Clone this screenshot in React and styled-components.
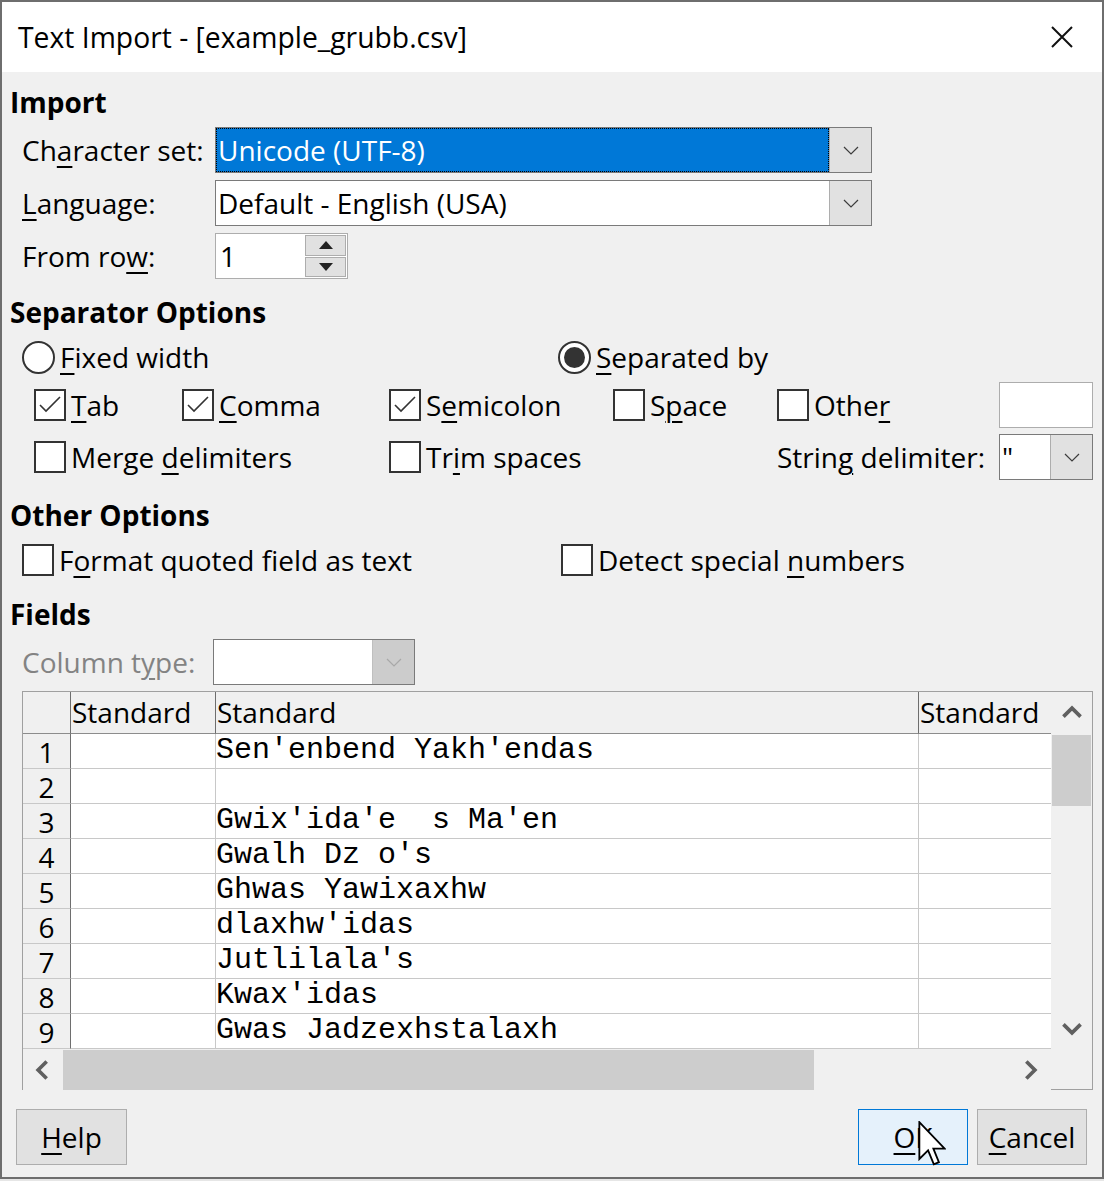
import React from 'react';
import styled, { createGlobalStyle } from 'styled-components';

const GlobalStyle = createGlobalStyle`
  html, body {
    margin: 0;
    padding: 0;
    background: #e6e6e6;
  }
  body {
    font-family: 'Open Sans', 'Noto Sans', sans-serif;
    color: #000;
  }
`;

const Window = styled.div`
  position: relative;
  width: 1104px;
  height: 1179px;
  box-sizing: border-box;
  border: 2px solid #6e6e6e;
  display: flex;
  flex-direction: column;
  background: #f0f0f0;
  font-size: 28px;
`;

const TitleBar = styled.div`
  flex: none;
  height: 70px;
  background: #fff;
  display: flex;
  align-items: center;
  padding-left: 16px;
  font-size: 28.3px;
`;

const Title = styled.div`
  flex: 1;
`;

const CloseBtn = styled.div`
  width: 80px;
  height: 70px;
  display: flex;
  align-items: center;
  justify-content: center;
`;

const Body = styled.div`
  flex: 1;
  display: flex;
  flex-direction: column;
  padding: 10px 0 0 8px;
`;

const Heading = styled.div`
  height: 40px;
  line-height: 40px;
  font-weight: 700;
  margin-top: ${p => p.$mt || 0}px;
`;

const U = styled.span`
  text-decoration: underline;
  text-decoration-thickness: 2px;
  text-underline-offset: 5px;
`;

const FormGrid = styled.div`
  margin-top: ${p => p.$mt ?? 5}px;
  padding-left: 12px;
  display: grid;
  grid-template-columns: ${p => p.$label || 193}px auto;
  grid-auto-rows: 46px;
  row-gap: 7px;
  justify-items: start;
`;

const Label = styled.div`
  line-height: 46px;
  white-space: nowrap;
  color: ${p => (p.$disabled ? '#838383' : '#000')};
`;

const Combo = styled.div`
  box-sizing: border-box;
  width: ${p => p.$w}px;
  height: 46px;
  border: 1px solid #7a7a7a;
  background: #fff;
  display: flex;
`;

const ComboText = styled.div`
  flex: 1;
  line-height: 44px;
  padding-left: 2px;
  white-space: nowrap;
  overflow: hidden;
  background: ${p => (p.$selected ? '#0078d7' : 'transparent')};
  color: ${p => (p.$selected ? '#fff' : '#000')};
  outline: ${p => (p.$selected ? '1px dotted #000' : 'none')};
  outline-offset: -1px;
`;

const ComboButton = styled.div`
  flex: none;
  width: 41px;
  background: ${p => (p.$disabled ? '#cccccc' : '#e1e1e1')};
  border-left: 1px solid ${p => (p.$disabled ? '#bfbfbf' : '#adadad')};
  display: flex;
  align-items: center;
  justify-content: center;
`;

const Spin = styled.div`
  box-sizing: border-box;
  width: 133px;
  height: 46px;
  border: 1px solid #adadad;
  background: #fff;
  display: flex;
`;

const SpinText = styled.div`
  flex: 1;
  line-height: 44px;
  padding-left: 4px;
`;

const SpinButtons = styled.div`
  width: 41px;
  display: flex;
  flex-direction: column;
  padding: 1px 1px 1px 0;
  gap: 1px;
`;

const SpinButton = styled.div`
  flex: 1;
  background: #e1e1e1;
  border: 1px solid #adadad;
  display: flex;
  align-items: center;
  justify-content: center;
`;

const OptionRow = styled.div`
  margin-top: ${p => p.$mt ?? 6}px;
  height: 38px;
  padding-left: 12px;
  display: grid;
  grid-template-columns: ${p => p.$first}px auto;
  align-items: center;
`;

const Option = styled.label`
  display: flex;
  align-items: center;
  gap: 5px;
  white-space: nowrap;
  grid-column: ${p => p.$span || 'auto'};
`;

const RadioCircle = styled.span`
  box-sizing: border-box;
  width: 33px;
  height: 33px;
  border: 2px solid #333;
  border-radius: 50%;
  background: #fff;
  display: flex;
  align-items: center;
  justify-content: center;
  &::after {
    content: '';
    width: 21px;
    height: 21px;
    border-radius: 50%;
    background: ${p => (p.$checked ? '#333' : 'transparent')};
  }
`;

const Box = styled.span`
  box-sizing: border-box;
  flex: none;
  width: 32px;
  height: 32px;
  border: 2px solid #333;
  background: #fff;
  display: flex;
  align-items: center;
  justify-content: center;
`;

const CheckGrid = styled.div`
  margin-top: 6px;
  padding-left: 24px;
  display: grid;
  grid-template-columns: 148px 207px 224px 164px 222px 94px;
  grid-auto-rows: 46px;
  row-gap: 6px;
  align-items: center;
`;

const Field = styled.div`
  box-sizing: border-box;
  width: 94px;
  height: 46px;
  border: 1px solid #adadad;
  background: #fff;
`;

const Table = styled.div`
  margin: 6px 0 0 12px;
  width: 1071px;
  height: 399px;
  box-sizing: border-box;
  border-top: 1px solid #a0a0a0;
  border-left: 1px solid #a0a0a0;
  display: grid;
  grid-template-columns: 1fr 42px;
  grid-template-rows: 1fr 41px;
  background: #fff;
`;

const Cells = styled.div`
  overflow: hidden;
  display: grid;
  grid-template-columns: 48px 145px 703px 132px;
  grid-template-rows: 42px;
  grid-auto-rows: 35px;
`;

const HeadCell = styled.div`
  box-sizing: border-box;
  background: #f0f0f0;
  border-bottom: 1px solid #8c8c8c;
  border-right: ${p => (p.$last ? 'none' : '1px solid #6e6e6e')};
  line-height: 40px;
  padding-left: 1px;
  white-space: nowrap;
`;

const RowNum = styled.div`
  box-sizing: border-box;
  background: #f0f0f0;
  border-bottom: 1px solid #c8c8c8;
  border-right: 1px solid #6e6e6e;
  text-align: center;
  line-height: 34px;
  height: 35px;
  padding-top: 1px;
`;

const Cell = styled.div`
  box-sizing: border-box;
  border-bottom: 1px solid #c8c8c8;
  border-right: ${p => (p.$last ? 'none' : '1px solid #c8c8c8')};
  font-family: 'Liberation Mono', 'DejaVu Sans Mono', monospace;
  font-size: 30px;
  line-height: 33px;
  white-space: pre;
`;

const VScroll = styled.div`
  background: #f0f0f0;
  border-right: 1px solid #a0a0a0;
  display: flex;
  flex-direction: column;
`;

const ArrowBox = styled.div`
  flex: none;
  height: ${p => p.$h || 42}px;
  width: ${p => p.$w || 'auto'};
  display: flex;
  align-items: center;
  justify-content: center;
`;

const VTrack = styled.div`
  flex: 1;
  padding: 1px 1px 0 1px;
`;

const VThumb = styled.div`
  height: 71px;
  background: #cdcdcd;
`;

const HScroll = styled.div`
  background: #f0f0f0;
  display: flex;
  align-items: stretch;
`;

const HTrack = styled.div`
  flex: 1;
  padding-top: 1px;
`;

const HThumb = styled.div`
  width: 751px;
  height: 100%;
  background: #cdcdcd;
`;

const Corner = styled.div`
  background: #f0f0f0;
  border-right: 1px solid #a0a0a0;
  border-bottom: 1px solid #a0a0a0;
`;

const Footer = styled.div`
  margin-top: 19px;
  padding: 0 15px 0 6px;
  display: flex;
  align-items: center;
`;

const Button = styled.div`
  position: relative;
  box-sizing: border-box;
  width: ${p => p.$w || 111}px;
  height: 56px;
  border: 1px solid ${p => (p.$default ? '#0078d7' : '#adadad')};
  background: ${p => (p.$default ? '#e5f1fb' : '#e1e1e1')};
  display: flex;
  align-items: center;
  justify-content: center;
  margin-left: ${p => p.$ml || 0}px;
`;

const Spacer = styled.div`
  flex: 1;
`;

const Cursor = styled.svg`
  position: absolute;
  left: 59px;
  top: 11px;
`;

const Chevron = ({ dir = 'down', size = 18, color = '#3c3c3c', sw = 1.2 }) => {
  const paths = {
    down: 'M2 6 L9 13 L16 6',
    up: 'M2 12 L9 5 L16 12',
    left: 'M12 2 L5 9 L12 16',
    right: 'M6 2 L13 9 L6 16',
  };
  return (
    <svg width={size} height={size} viewBox="0 0 18 18">
      <path d={paths[dir]} fill="none" stroke={color} strokeWidth={sw} />
    </svg>
  );
};

const Triangle = ({ up }) => (
  <svg width="14" height="8" viewBox="0 0 14 8">
    <path d={up ? 'M0 8 L7 0 L14 8 Z' : 'M0 0 L7 8 L14 0 Z'} fill="#222" />
  </svg>
);

const Check = () => (
  <svg width="28" height="28" viewBox="0 0 28 28">
    <path d="M4 14 L10 20 L24 6" fill="none" stroke="#333" strokeWidth="1.6" />
  </svg>
);

const CheckOption = ({ checked, children, span }) => (
  <Option $span={span}>
    <Box>{checked && <Check />}</Box>
    <span>{children}</span>
  </Option>
);

const rows = [
  "Sen'enbend Yakh'endas",
  '',
  "Gwix'ida'e  s Ma'en",
  "Gwalh Dz o's",
  'Ghwas Yawixaxhw',
  "dlaxhw'idas",
  "Jutlilala's",
  "Kwax'idas",
  'Gwas Jadzexhstalaxh',
];

const App = () => (
  <>
    <GlobalStyle />
    <Window>
      <TitleBar>
        <Title>Text Import - [example_grubb.csv]</Title>
        <CloseBtn>
          <svg width="24" height="24" viewBox="0 0 24 24">
            <path d="M2 2 L22 22 M22 2 L2 22" stroke="#111" strokeWidth="2" />
          </svg>
        </CloseBtn>
      </TitleBar>
      <Body>
        <Heading>Import</Heading>
        <FormGrid>
          <Label>
            Ch<U>a</U>racter set:
          </Label>
          <Combo $w={657}>
            <ComboText $selected>Unicode (UTF-8)</ComboText>
            <ComboButton>
              <Chevron />
            </ComboButton>
          </Combo>
          <Label>
            <U>L</U>anguage:
          </Label>
          <Combo $w={657}>
            <ComboText>Default - English (USA)</ComboText>
            <ComboButton>
              <Chevron />
            </ComboButton>
          </Combo>
          <Label>
            From ro<U>w</U>:
          </Label>
          <Spin>
            <SpinText>1</SpinText>
            <SpinButtons>
              <SpinButton>
                <Triangle up />
              </SpinButton>
              <SpinButton>
                <Triangle />
              </SpinButton>
            </SpinButtons>
          </Spin>
        </FormGrid>

        <Heading $mt={13}>Separator Options</Heading>
        <OptionRow $first={536}>
          <Option>
            <RadioCircle />
            <span>
              <U>F</U>ixed width
            </span>
          </Option>
          <Option>
            <RadioCircle $checked />
            <span>
              <U>S</U>eparated by
            </span>
          </Option>
        </OptionRow>
        <CheckGrid>
          <CheckOption checked>
            <U>T</U>ab
          </CheckOption>
          <CheckOption checked>
            <U>C</U>omma
          </CheckOption>
          <CheckOption checked>
            S<U>e</U>micolon
          </CheckOption>
          <CheckOption>
            S<U>p</U>ace
          </CheckOption>
          <CheckOption>
            Othe<U>r</U>
          </CheckOption>
          <Field />
          <CheckOption span="span 2">
            Merge <U>d</U>elimiters
          </CheckOption>
          <CheckOption span="span 2">
            Tr<U>i</U>m spaces
          </CheckOption>
          <Label>
            Strin<U>g</U> delimiter:
          </Label>
          <Combo $w={94}>
            <ComboText>"</ComboText>
            <ComboButton>
              <Chevron />
            </ComboButton>
          </Combo>
        </CheckGrid>

        <Heading $mt={15}>Other Options</Heading>
        <OptionRow $first={539} $mt={6}>
          <CheckOption>
            F<U>o</U>rmat quoted field as text
          </CheckOption>
          <CheckOption>
            Detect special <U>n</U>umbers
          </CheckOption>
        </OptionRow>

        <Heading $mt={15}>Fields</Heading>
        <FormGrid $label={191} $mt={5}>
          <Label $disabled>
            Column t<U>y</U>pe:
          </Label>
          <Combo $w={202}>
            <ComboText />
            <ComboButton $disabled>
              <Chevron color="#a8a8a8" />
            </ComboButton>
          </Combo>
        </FormGrid>

        <Table>
          <Cells>
            <HeadCell />
            <HeadCell>Standard</HeadCell>
            <HeadCell>Standard</HeadCell>
            <HeadCell $last>Standard</HeadCell>
            {rows.map((text, i) => (
              <React.Fragment key={i}>
                <RowNum>{i + 1}</RowNum>
                <Cell />
                <Cell>{text}</Cell>
                <Cell $last />
              </React.Fragment>
            ))}
          </Cells>
          <VScroll>
            <ArrowBox>
              <Chevron dir="up" size={22} color="#606060" sw={3} />
            </ArrowBox>
            <VTrack>
              <VThumb />
            </VTrack>
            <ArrowBox>
              <Chevron dir="down" size={22} color="#606060" sw={3} />
            </ArrowBox>
          </VScroll>
          <HScroll>
            <ArrowBox $w="40px">
              <Chevron dir="left" size={22} color="#606060" sw={3} />
            </ArrowBox>
            <HTrack>
              <HThumb />
            </HTrack>
            <ArrowBox $w="42px">
              <Chevron dir="right" size={22} color="#606060" sw={3} />
            </ArrowBox>
          </HScroll>
          <Corner />
        </Table>

        <Footer>
          <Button>
            <span>
              <U>H</U>elp
            </span>
          </Button>
          <Spacer />
          <Button $default $w={110}>
            <span>
              <U>O</U>K
            </span>
            <Cursor width="28" height="46" viewBox="0 0 12 20">
              <path
                d="M0.5 0.5 L0.5 16.5 L4.3 12.8 L6.8 18.8 L9 17.9 L6.6 12 L11.5 12 Z"
                fill="#fff"
                stroke="#000"
                strokeWidth="0.8"
              />
            </Cursor>
          </Button>
          <Button $ml={9} $w={110}>
            <span>
              <U>C</U>ancel
            </span>
          </Button>
        </Footer>
      </Body>
    </Window>
  </>
);

export default App;
